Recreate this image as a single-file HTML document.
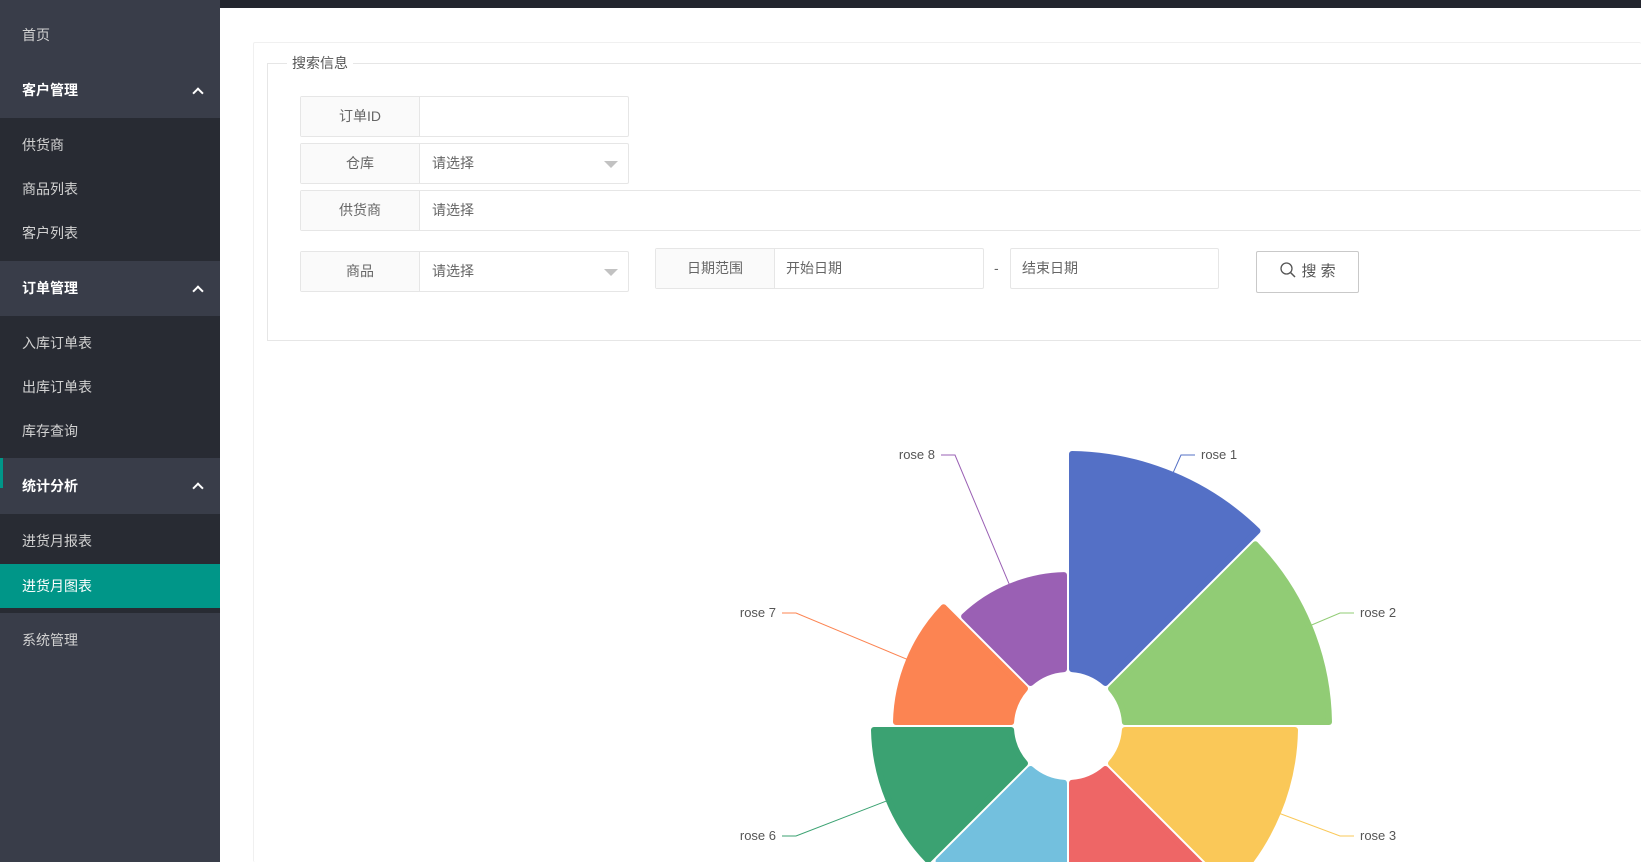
<!DOCTYPE html>
<html><head><meta charset="utf-8">
<style>
*{margin:0;padding:0;box-sizing:border-box}
body{width:1641px;height:862px;overflow:hidden;background:#fff;font-family:"Liberation Sans","Noto Sans CJK SC",sans-serif;font-size:14px;color:#666;position:relative}
.top{position:absolute;left:0;top:0;width:1641px;height:8px;background:#23262e}
.side{position:absolute;left:0;top:0;width:220px;height:862px;background:#393d49}
.side div{position:absolute;left:0;width:220px;color:#d2d2d2;padding-left:22px;font-size:14px}
.hdr{color:#fff!important;font-weight:bold;background:#393d49}
.sub{background:#282b33!important}
.arrow{position:absolute;right:18px;top:50%;width:8px;height:8px;border-left:2px solid #fff;border-top:2px solid #fff;transform:translateY(-25%) rotate(45deg)}
.box{position:absolute;border:1px solid #e6e6e6;border-radius:2px;background:#fff;height:41px}
.lab{position:absolute;left:0;top:0;bottom:0;width:119px;background:#fafafa;border-right:1px solid #e6e6e6;text-align:center;line-height:39px;color:#666}
.val{position:absolute;left:131px;top:0;line-height:39px;color:#666}
.tri{position:absolute;right:10px;top:17px;border-left:7px solid transparent;border-right:7px solid transparent;border-top:7px solid #c2c2c2}
</style></head><body>
<div class="top"></div>
<div class="side">
<div style="top:8px;height:55px;line-height:55px;">首页</div>
<div class="hdr" style="top:63px;height:55px;line-height:55px">客户管理<span class="arrow"></span></div>
<div class="sub" style="top:118px;height:143px"></div>
<div style="top:134px;line-height:22px">供货商</div>
<div style="top:178px;line-height:22px">商品列表</div>
<div style="top:222px;line-height:22px">客户列表</div>
<div class="hdr" style="top:261px;height:55px;line-height:55px">订单管理<span class="arrow"></span></div>
<div class="sub" style="top:316px;height:142px"></div>
<div style="top:332px;line-height:22px">入库订单表</div>
<div style="top:376px;line-height:22px">出库订单表</div>
<div style="top:420px;line-height:22px">库存查询</div>
<div class="hdr" style="top:458px;height:56px;line-height:56px">统计分析<span class="arrow"></span></div>
<div style="top:458px;width:3px;height:30px;background:#009688;padding:0"></div>
<div class="sub" style="top:514px;height:99px"></div>
<div style="top:530px;line-height:22px">进货月报表</div>
<div style="top:564px;height:44px;line-height:44px;background:#009688;color:#fff">进货月图表</div>
<div style="top:629px;line-height:22px">系统管理</div>
</div>

<div style="position:absolute;left:253px;top:42px;width:1388px;height:820px;border:1px solid #f0f0f0;border-right:none;border-bottom:none;border-radius:2px"></div>
<div style="position:absolute;left:267px;top:63px;width:1374px;height:278px;border:1px solid #e6e6e6;border-right:none"></div>
<div style="position:absolute;left:287px;top:53px;padding:0 5px;background:#fff;color:#555;font-size:14px;line-height:20px">搜索信息</div>

<div class="box" style="left:300px;top:96px;width:329px"><div class="lab">订单ID</div></div>
<div class="box" style="left:300px;top:143px;width:329px"><div class="lab">仓库</div><div class="val">请选择</div><div class="tri"></div></div>
<div class="box" style="left:300px;top:190px;width:1341px;border-right:none"><div class="lab">供货商</div><div class="val">请选择</div></div>
<div class="box" style="left:300px;top:251px;width:329px"><div class="lab">商品</div><div class="val">请选择</div><div class="tri"></div></div>
<div class="box" style="left:655px;top:248px;width:329px"><div class="lab">日期范围</div><div class="val" style="left:130px">开始日期</div></div>
<div style="position:absolute;left:994px;top:258px;line-height:20px">-</div>
<div class="box" style="left:1010px;top:248px;width:209px"><div class="val" style="left:11px">结束日期</div></div>
<div style="position:absolute;left:1256px;top:251px;width:103px;height:42px;border:1px solid #c9c9c9;border-radius:2px;line-height:40px;text-align:center;color:#555;font-size:15px">
<svg width="18" height="18" viewBox="0 0 18 18" style="vertical-align:-3px"><circle cx="7.5" cy="7.5" r="5.5" fill="none" stroke="#555" stroke-width="1.3"/><path d="M11.5 11.5L16 16" stroke="#555" stroke-width="1.5"/></svg> 搜 索</div>

<svg id="ch" width="1641" height="862" style="position:absolute;left:0;top:0" font-family="Liberation Sans, sans-serif" font-size="13" fill="#555"></svg>
<script>
var cx=1068,cy=726,ri=54,g=4;
var data=[[275,'#5470c6'],[264,'#91cc75'],[230,'#fac858'],[200,'#ee6666'],[190,'#73c0de'],[197,'#3ba272'],[175,'#fc8452'],[154,'#9a60b4']];
var s='';
function pt(r,a){a=a*Math.PI/180;return [(cx+r*Math.sin(a)).toFixed(1),(cy-r*Math.cos(a)).toFixed(1)];}
function off(r){return Math.asin(g/r)*180/Math.PI;}
data.forEach(function(d,i){
 var r=d[0]-3,r0=ri+3;
 var p1=pt(r0,i*45+off(r0)),p2=pt(r,i*45+off(r)),p3=pt(r,(i+1)*45-off(r)),p4=pt(r0,(i+1)*45-off(r0));
 s+='<path d="M'+p1+'L'+p2+'A'+r+' '+r+' 0 0 1 '+p3+'L'+p4+'A'+r0+' '+r0+' 0 0 0 '+p1+'Z" fill="'+d[1]+'" stroke="'+d[1]+'" stroke-width="6" stroke-linejoin="round"/>';
});
var L=[[0,1201,455,'rose 1','start'],[1,1360,613,'rose 2','start'],[2,1360,836,'rose 3','start'],[5,776,836,'rose 6','end'],[6,776,613,'rose 7','end'],[7,935,455,'rose 8','end']];
L.forEach(function(l){
 var d=data[l[0]],a=l[0]*45+22.5,p=pt(d[0]-8,a);
 var dx=l[4]=='start'?-6:6;var ex=l[1]+dx,ey=l[2];var mx=l[4]=='start'?ex-14:ex+14;
 s+='<polyline points="'+p+' '+(mx)+','+ey+' '+ex+','+ey+'" fill="none" stroke="'+d[1]+'" stroke-width="1"/>';
 s+='<text x="'+l[1]+'" y="'+(l[2]+4)+'" text-anchor="'+l[4]+'">'+l[3]+'</text>';
});
document.getElementById('ch').innerHTML=s;
</script>
</body></html>
